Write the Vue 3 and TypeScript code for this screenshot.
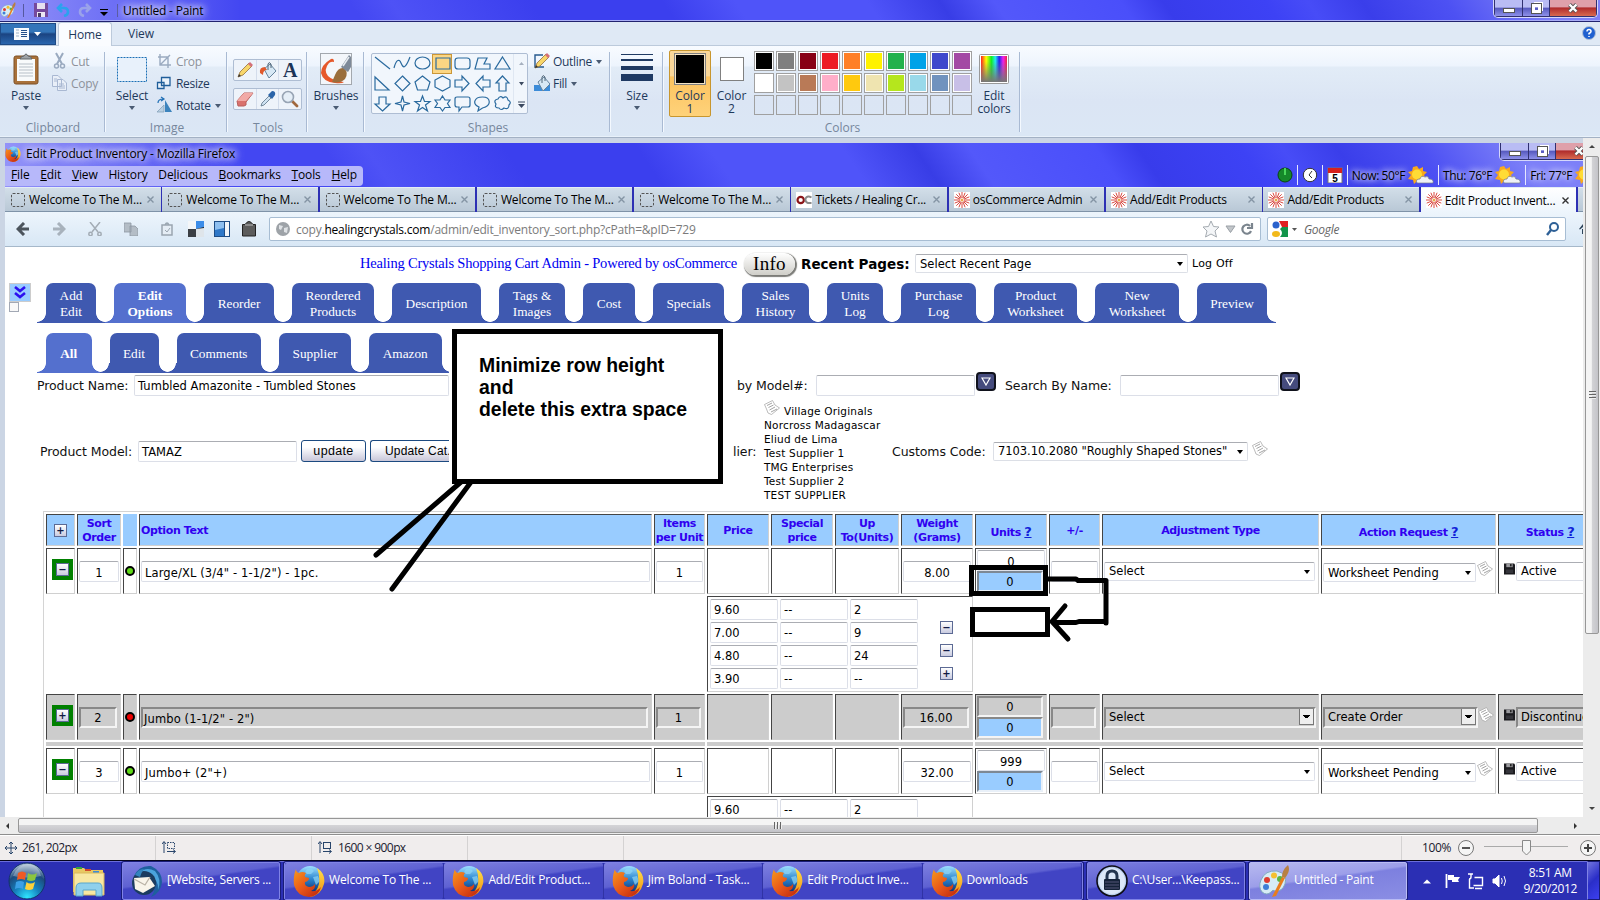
<script setup lang="ts">
interface PageTab { label: string[]; width: number; active?: boolean }
interface BrowserTab { title: string; icon: 'blank' | 'oc' | 'os'; active?: boolean }
interface StockRow {
  sort: string; text: string; items: string; weight: string
  units: string; action: string; status: string; live: boolean; open: boolean; prices: string[][]
}

const palette: string[] = [
  '#000000', '#7f7f7f', '#880015', '#ed1c24', '#ff7f27', '#fff200', '#22b14c', '#00a2e8', '#3f48cc', '#a349a4',
  '#ffffff', '#c3c3c3', '#b97a57', '#ffaec9', '#ffc90e', '#efe4b0', '#b5e61d', '#99d9ea', '#7092be', '#c8bfe7',
  '', '', '', '', '', '', '', '', '', '',
]

const shapes: string[] = [
  'M2 3L17 15', 'M1 14C3 6 6 4 8 9S12 16 17 3', 'M2 9a7.5 6 0 1 0 15 0a7.5 6 0 1 0 -15 0', 'M3 4H17V15H3Z',
  'M5 4H14Q17 4 17 7V12Q17 15 14 15H5Q2 15 2 12V7Q2 4 5 4Z', 'M2 15L5 4H14L11 10H17V15Z', 'M9.500 3L17 15H2Z',
  'M2 3V16H16Z', 'M9.500 2L17 9.500L9.500 17L2 9.500Z', 'M9.500 2L17 8L14.500 16H4.500L2 8Z', 'M9.500 2L17 6V13L9.500 17L2 13V6Z',
  'M2 6H9V2L16 9.500L9 17V13H2Z', 'M17 6H10V2L3 9.500L10 17V13H17Z', 'M9.500 2L16 9H13V17H6V9H3Z',
  'M9.500 17L17 10H13V3H6V10H2Z', 'M9.500 2L11 8L17 9.500L11 11L9.500 17L8 11L2 9.500L8 8Z',
  'M9.500 2L11.500 7.500H17L12.500 11L14.500 17L9.500 13.500L4.500 17L6.500 11L2 7.500H7.500Z',
  'M9.500 2L12 6L17 6L14.500 9.500L17 13.500H12L9.500 17L7 13.500H2L4.500 9.500L2 6H7Z',
  'M4 3H15Q17 3 17 5V11Q17 13 15 13H9L6 17V13H4Q2 13 2 11V5Q2 3 4 3Z',
  'M6 13C-1 10 1 3 9.500 3S19 12 9.500 14L5 17Z',
  'M5 5Q7 1 10 4Q14 1 15 6Q19 8 16 11Q16 16 11 14Q8 17 6 14Q1 14 3 10Q0 6 5 5Z',
]

const menus: [string, string, string][] = [
  ['', 'F', 'ile'], ['', 'E', 'dit'], ['', 'V', 'iew'], ['Hi', 's', 'tory'], ['De', 'l', 'icious'],
  ['', 'B', 'ookmarks'], ['', 'T', 'ools'], ['', 'H', 'elp'],
]

const browserTabs: BrowserTab[] = [
  ...Array.from({ length: 5 }, (): BrowserTab => ({ title: 'Welcome To The M...', icon: 'blank' })),
  { title: 'Tickets / Healing Cr...', icon: 'oc' },
  { title: 'osCommerce Admin', icon: 'os' },
  { title: 'Add/Edit Products', icon: 'os' },
  { title: 'Add/Edit Products', icon: 'os' },
  { title: 'Edit Product Invent...', icon: 'os', active: true },
]

const mainTabs: PageTab[] = [
  { label: ['Add', 'Edit'], width: 50 }, { label: ['Edit', 'Options'], width: 72, active: true },
  { label: ['Reorder'], width: 70 }, { label: ['Reordered', 'Products'], width: 82 },
  { label: ['Description'], width: 89 }, { label: ['Tags &', 'Images'], width: 66 },
  { label: ['Cost'], width: 52 }, { label: ['Specials'], width: 71 }, { label: ['Sales', 'History'], width: 67 },
  { label: ['Units', 'Log'], width: 56 }, { label: ['Purchase', 'Log'], width: 75 },
  { label: ['Product', 'Worksheet'], width: 83 }, { label: ['New', 'Worksheet'], width: 84 }, { label: ['Preview'], width: 70 },
]
const subTabs: PageTab[] = [
  { label: ['All'], width: 45.5, active: true }, { label: ['Edit'], width: 49 }, { label: ['Comments'], width: 84.5 },
  { label: ['Supplier'], width: 72 }, { label: ['Amazon'], width: 72.5 },
]

const suppliers: string[] = ['Village Originals', 'Norcross Madagascar', 'Eliud de Lima', 'Test Supplier 1', 'TMG Enterprises', 'Test Supplier 2', 'TEST SUPPLIER']

const prices: string[][] = [['9.60', '--', '2'], ['7.00', '--', '9'], ['4.80', '--', '24'], ['3.90', '--', '--']]
const rows: StockRow[] = [
  { sort: '1', text: 'Large/XL (3/4" - 1-1/2") - 1pc.', items: '1', weight: '8.00', units: '0', action: 'Worksheet Pending', status: 'Active', live: true, open: true, prices },
  { sort: '2', text: 'Jumbo (1-1/2" - 2")', items: '1', weight: '16.00', units: '0', action: 'Create Order', status: 'Discontinued', live: false, open: false, prices: [] },
  { sort: '3', text: 'Jumbo+ (2"+)', items: '1', weight: '32.00', units: '999', action: 'Worksheet Pending', status: 'Active', live: true, open: true, prices },
]

const firefoxWindows: string[] = ['Welcome To The ...', 'Add/Edit Product...', 'Jim Boland - Task...', 'Edit Product Inve...', 'Downloads']
</script>

<template>
  <svg class="defs" width="0" height="0">
    <defs>
      <linearGradient id="gBlue" x1="0" y1="0" x2="0" y2="1"><stop offset="0" stop-color="#9fe0ff" /><stop offset=".5" stop-color="#2b86cf" /><stop offset="1" stop-color="#0d2f74" /></linearGradient>
      <linearGradient id="gFox" x1="0" y1="0" x2="1" y2="1"><stop offset="0" stop-color="#f79a1c" /><stop offset=".5" stop-color="#e8561a" /><stop offset="1" stop-color="#b8230c" /></linearGradient>
      <linearGradient id="gGold" x1="0" y1="0" x2="0" y2="1"><stop offset="0" stop-color="#ffe14a" /><stop offset="1" stop-color="#f08a10" /></linearGradient>
      <radialGradient id="gOrb" cx=".5" cy=".95" r=".9"><stop offset="0" stop-color="#2fe6ff" /><stop offset=".4" stop-color="#1580bd" /><stop offset=".75" stop-color="#1c4a7c" /><stop offset="1" stop-color="#9fb6cc" /></radialGradient>
      <linearGradient id="gHue"><stop offset="0" stop-color="#f22" /><stop offset=".2" stop-color="#ff0" /><stop offset=".4" stop-color="#1e2" /><stop offset=".55" stop-color="#2ee" /><stop offset=".7" stop-color="#22e" /><stop offset=".85" stop-color="#e2e" /><stop offset="1" stop-color="#e24" /></linearGradient>
      <linearGradient id="gFade" x1="0" y1="0" x2="0" y2="1"><stop offset=".2" stop-color="#777" stop-opacity="0" /><stop offset="1" stop-color="#777" /></linearGradient>
    </defs>
    <symbol id="fox" viewBox="0 0 32 32">
      <circle cx="17" cy="14" r="13" fill="url(#gBlue)" />
      <path d="M14 4q5-1 7 2l-3 3-4 0-2-2zM20 12l5-1 2 5-4 4z" fill="#8fd6f7" opacity=".7" />
      <path d="M24 3Q33 9 31 19Q28 31 16 32Q24 27 26 19Q27 10 24 3Z" fill="url(#gGold)" />
      <path d="M3 4Q3 7 6 8Q9 6 13 8Q11 10 12 12L16 13Q16 16 12 17Q11 21 16 22Q20 22 22 19Q23 24 18 26Q24 27 28 22Q26 31 16 32Q4 31 1 20Q0 11 3 4Z" fill="url(#gFox)" />
    </symbol>
    <symbol id="tbird" viewBox="0 0 32 32">
      <path d="M3 11Q8 0 20 1Q31 6 31 17Q30 28 20 32Q26 24 22 15Z" fill="#1d5f9d" />
      <path d="M8 8Q15 1 24 6Q31 14 27 25Q28 14 18 11Z" fill="#4ba3dc" />
      <ellipse cx="13" cy="18" rx="12" ry="12" fill="#1b3c60" /><path d="M3 13L18 12L24 21L12 28L4 24Z" fill="#f8f4ea" /><path d="M3 14L14 20L19 12" fill="none" stroke="#b9b2a6" stroke-width="1.300" />
      <path d="M4 10Q7 4 13 4Q10 8 9 12Z" fill="#3484bd" />
    </symbol>
    <symbol id="palette" viewBox="0 0 32 32">
      <path d="M3 15Q7 5 19 6Q30 9 27 19Q24 27 17 26Q15 24 13 27Q9 31 4 27Q0 22 3 15Z" fill="#d7ecf5" stroke="#7fa8c0" />
      <circle cx="9" cy="15" r="3" fill="#df3b2f" /><circle cx="16" cy="10.500" r="3" fill="#f4c030" /><circle cx="22" cy="14" r="3" fill="#5cb544" /><circle cx="8" cy="22" r="3" fill="#3f7fd6" />
      <path d="M14 32L24 12L27 13L18 31Z" fill="#e87d1e" /><path d="M24 12Q24 5 30 0Q33 6 27 13Z" fill="#b88043" />
    </symbol>
    <symbol id="note" viewBox="0 0 16 15"><path d="M.5 4.500L8.500 .5L11 5L15.500 8L7.500 14.500L4 13L2.500 9Z" fill="#fff" stroke="#aaa" stroke-width=".8" /><path d="M3 5.500L8 3M4.500 7.500L9.500 5M5.500 10L11 7M7 12L13 9" fill="none" stroke="#8c8c8c" stroke-width=".8" /></symbol>
    <symbol id="floppy" viewBox="0 0 12 12"><path d="M0 0H11L12 1V12H0Z" fill="#1b1b1f" /><rect x="2.500" y="0" width="7" height="4" fill="#9a9a9e" /><rect x="6.500" y=".6" width="1.800" height="2.500" fill="#222" /><rect x="2" y="6.500" width="8" height="4" fill="#34343a" /></symbol>
    <symbol id="burst" viewBox="0 0 16 16"><rect width="16" height="16" fill="#fff" /><path d="M8 0V6M8 10V16M0 8H6M10 8H16M2.300 2.300L6.500 6.500M9.500 9.500L13.700 13.700M13.700 2.300L9.500 6.500M6.500 9.500L2.300 13.700M4.900 .7L7 6M11.100 .7L9 6M4.900 15.300L7 10M11.100 15.300L9 10M.7 4.900L6 7M.7 11.100L6 9M15.300 4.900L10 7M15.300 11.100L10 9" stroke="#d84a42" stroke-width="1" /><circle cx="8" cy="8" r="1.500" fill="#e9a64a" /></symbol>
    <symbol id="sun" viewBox="0 0 26 18"><path d="M9 0L11 3L15 1L15 5L19 6L16 9L18 13L14 13L13 17L9 15L6 18L5 14L0 13L3 9L0 6L4 5L5 1Z" fill="#f9a91c" /><circle cx="9" cy="8.500" r="5" fill="#ffdc35" /><path d="M9 17Q7 13 12 13Q13 9 17 11Q20 9 21 13Q26 13 25 17Z" fill="#eef1f5" stroke="#777f8c" stroke-width=".7" /></symbol>
    <symbol id="bucket" viewBox="0 0 18 18"><path d="M5 8L11 3L17 10L10 17Z" fill="#d7e8f5" stroke="#66839c" /><path d="M9 9V3Q10 0 12 3V7" fill="none" stroke="#53687b" /></symbol>
    <symbol id="pencil" viewBox="0 0 18 18"><path d="M2 16L4 11L13 2L16 5L7 14Z" fill="#f8d66a" stroke="#94703c" stroke-width=".8" /><path d="M12 3L14 1L17 4L15 6Z" fill="#d4707a" /><path d="M2 16L3 13L5 15Z" fill="#333" /></symbol>
    <symbol id="lens" viewBox="0 0 18 18"><path d="M10 10L16 16" stroke="#a1683e" stroke-width="2.800" stroke-linecap="round" /><circle cx="7" cy="7" r="5.500" fill="#e5eef7" stroke="#98a4b4" stroke-width="1.600" /></symbol>
  </svg>

  <div class="screen">
    <header class="titlebar glass">
      <svg class="t-logo" width="16" height="16"><use href="#palette" /></svg>
      <i class="t-sep"></i>
      <svg width="14" height="14" viewBox="0 0 14 14"><path d="M0 0H14V14H0Z" fill="#75499d" /><rect x="3" width="8" height="6" fill="#e6dfef" /><rect x="3" y="9" width="8" height="5" fill="#ece7f3" /><rect x="4" y="10" width="3" height="4" fill="#4c3d68" /></svg>
      <svg class="undo" width="14" height="14" viewBox="0 0 14 14"><path d="M3 5H8Q12 5 12 9Q12 12 8 13M6 1L2 5L6 9" fill="none" stroke="#2ba2ee" stroke-width="2.600" /></svg>
      <svg class="redo" width="14" height="14" viewBox="0 0 14 14"><path d="M11 5H6Q2 5 2 9Q2 12 6 13M8 1L12 5L8 9" fill="none" stroke="#9aa2ea" stroke-width="2.600" /></svg>
      <svg class="quick" width="8" height="7" viewBox="0 0 8 7"><path d="M0 .5H8" stroke="#000" /><path d="M0 3H8L4 7Z" /></svg>
      <i class="t-sep2"></i>
      <span class="t-name">Untitled - Paint</span>
      <div class="winbtns"><b class="min"><i></i></b><b class="max"><i></i></b><b class="cls"><svg width="12" height="10" viewBox="0 0 12 10"><path d="M2.500 1.500L9.500 8.500M9.500 1.500L2.500 8.500" stroke="#555" stroke-width="4" /><path d="M2.500 1.500L9.500 8.500M9.500 1.500L2.500 8.500" stroke="#fff" stroke-width="2.400" /></svg></b></div>
    </header>

    <div class="tabstrip">
      <div class="appbtn"><svg width="28" height="12" viewBox="0 0 28 12"><rect width="15" height="12" fill="#f7fafd" /><path d="M2 2H5M2 5H5M2 8H5" stroke="#9db1c6" /><path d="M7 2.500H13M7 4.500H13M7 6.500H13M7 8.500H13" stroke="#234f8a" /><path d="M20 4H27L23.500 8Z" fill="#fff" /></svg></div>
      <div class="rtab on">Home</div><div class="rtab">View</div>
      <svg class="help" width="14" height="14" viewBox="0 0 14 14"><circle cx="7" cy="7" r="6.500" fill="#2060d0" stroke="#b4c2d6" /><path d="M5 5.500Q5 3.500 7 3.500T9 5.500Q9 6.500 7 7.500V8.500M7 10V11" stroke="#fff" stroke-width="1.500" fill="none" /></svg>
    </div>

    <section class="ribbon">
      <div class="group g-clip">
        <div class="gbody">
          <div class="big w51">
            <svg class="bi" width="26" height="32" viewBox="0 0 26 32"><rect x="1" y="3" width="24" height="28" rx="2" fill="#a9713a" stroke="#7d5027" /><path d="M4 6H22V28H4Z" fill="#f8fafb" /><path d="M6 11H20M6 14H20M6 17H20M6 20H20M6 23H20" stroke="#b7bfc7" /><path d="M7 6Q8 3 11 3Q13-1 15 3Q18 3 19 6Z" fill="#9ea2a6" stroke="#5f6468" /></svg>
            <span>Paste</span><i class="arr"></i>
          </div>
          <div class="smalls dim">
            <div><svg width="18" height="18" viewBox="0 0 18 18"><path d="M5 1L11 12M12 1L6 12" stroke="#9aaac0" stroke-width="2" /><circle cx="5.500" cy="14" r="2" fill="none" stroke="#9aaac0" stroke-width="1.500" /><circle cx="11.500" cy="14" r="2" fill="none" stroke="#9aaac0" stroke-width="1.500" /></svg>Cut</div>
            <div><svg width="18" height="18" viewBox="0 0 18 18"><path d="M1.500 1.500H7L10.500 5V12.500H1.500ZM6.500 5.500H12L15.500 9V16.500H6.500Z" fill="#e9eff8" stroke="#a9b8d2" /><path d="M3 5H6M3 7H6M8 10H13M8 12H14M8 14H14" stroke="#a9b8d2" /></svg>Copy</div>
          </div>
        </div>
        <div class="glabel">Clipboard</div>
      </div>
      <div class="group g-image">
        <div class="gbody">
          <div class="big w51">
            <svg class="bi" width="32" height="32" viewBox="0 0 32 32"><rect x="1.500" y="4.500" width="29" height="24" fill="#e8f1fb" stroke="#1a6fb5" stroke-dasharray="2 1" /></svg>
            <span>Select</span><i class="arr"></i>
          </div>
          <div class="smalls">
            <div class="dimt"><svg width="18" height="18" viewBox="0 0 18 18"><path d="M4 2V13H15M2 5H12V16M4 13L14 3" fill="none" stroke="#9aaac0" stroke-width="1.400" /></svg>Crop</div>
            <div><svg width="18" height="18" viewBox="0 0 18 18"><path d="M1.500 8.500H8V14.500H1.500Z M5.500 3.500H14V11.500H5.500Z" fill="#eaf3fb" stroke="#1f5e9a" stroke-width="1.300" /></svg>Resize</div>
            <div><svg width="18" height="18" viewBox="0 0 18 18"><path d="M9 16V4L16 16Z" fill="#3c83bd" /><path d="M1 16L8 9V16Z" fill="#b9cfe2" stroke="#7f9cb5" stroke-width=".7" /><path d="M2 7Q2 3 7 3M5 1L8 3L5 5" fill="none" stroke="#1f6fb5" stroke-width="1.200" /></svg>Rotate<i class="arr after"></i></div>
          </div>
        </div>
        <div class="glabel">Image</div>
      </div>
      <div class="group g-tools">
        <div class="gbody toolbody">
          <div class="toolbox"><b><svg width="18" height="18"><use href="#pencil" /></svg></b><b><svg width="18" height="18"><use href="#bucket" /><path d="M1 12Q0 6 6 6L8 9Q4 9 4 14Z" fill="#e0592c" /></svg></b><b class="A">A</b></div>
          <div class="toolbox"><b><svg width="18" height="16" viewBox="0 0 18 16"><path d="M1 10L8 2H17L10 11V14L8 15H2Z" fill="#d9716d" stroke="#b85f5c" /><path d="M1 10L8 2H17L10 10Z" fill="#f2aaa6" /></svg></b><b><svg width="18" height="18" viewBox="0 0 18 18"><path d="M2 16L3 13L10 6L12 8L5 15Z" fill="#cfe2f2" stroke="#5a7286" stroke-width=".8" /><path d="M9 5L13 1Q17 1 16 5L13 9Z" fill="#2b64a8" /></svg></b><b><svg width="18" height="18"><use href="#lens" /></svg></b></div>
        </div>
        <div class="glabel">Tools</div>
      </div>
      <div class="group g-brush">
        <div class="gbody"><div class="big w56">
          <svg class="bi" width="32" height="32" viewBox="0 0 32 32"><rect x=".5" y=".5" width="31" height="31" fill="#f3f6fa" stroke="#a3a8ae" /><path d="M11 6Q1 12 1 20Q3 29 15 30Q22 31 24 29Q13 28 8 23Q3 17 9 10Q12 8 14 9Q14 5 11 6Z" fill="#e6582a" /><path d="M15 22Q18 14 24 15Q29 20 25 26Q20 31 12 29Z" fill="#9a6e3c" /><path d="M21 14L29 2L31 4V14L28 19Z" fill="#7d8998" /><path d="M23 13L29 4" stroke="#e6ebf0" stroke-width="1.500" /></svg>
          <span>Brushes</span><i class="arr"></i></div></div>
      </div>
      <div class="group g-shapes">
        <div class="gbody">
          <div class="gallery">
            <div class="shapegrid"><i v-for="(d, i) in shapes" :key="i" :class="{ sel: i === 3 }"><svg width="19" height="19"><path :d="d" fill="none" stroke="#2a6a9e" stroke-width="1.200" /></svg></i></div>
            <div class="gscroll"><svg width="14" height="58" viewBox="0 0 14 58"><path d="M5 11H10L7.500 8Z" fill="#a6b0bf" /><path d="M5 28H10L7.500 31.500ZM4 47.500H11V48.500H4ZM4 50H11L7.500 54Z" fill="#3c4a60" /></svg></div>
          </div>
          <div class="smalls out">
            <div><svg width="18" height="18"><path d="M10 3H2V15H11" fill="none" stroke="#27598f" stroke-width="1.400" /><use href="#pencil" /></svg>Outline<i class="arr after"></i></div>
            <div><svg width="18" height="18"><path d="M1 11H17V17H1Z" fill="#3b8bd8" /><use href="#bucket" /></svg>Fill<i class="arr after"></i></div>
          </div>
        </div>
        <div class="glabel">Shapes</div>
      </div>
      <div class="group g-size">
        <div class="gbody"><div class="big w51"><svg class="bi" width="32" height="32" viewBox="0 0 32 32" fill="#1f3a63"><rect y="1" width="32" height="1" /><rect y="6" width="32" height="2" /><rect y="13" width="32" height="4" /><rect y="21" width="32" height="7" /></svg><span>Size</span><i class="arr"></i></div></div>
      </div>
      <div class="group g-colors">
        <div class="gbody">
          <div class="big c1"><i class="sw one"></i><span>Color<br>1</span></div>
          <div class="big c2"><i class="sw two"></i><span>Color<br>2</span></div>
          <div class="palette"><i v-for="(c, i) in palette" :key="i" :class="{ filled: c }" :style="{ background: c || 'transparent' }"></i></div>
          <div class="big c3"><svg width="30" height="30" viewBox="0 0 30 30"><rect x=".5" y=".5" width="29" height="29" rx="1" fill="#fff" stroke="#999" /><rect x="2" y="2" width="26" height="26" fill="url(#gHue)" /><rect x="2" y="2" width="26" height="26" fill="url(#gFade)" /></svg><span>Edit<br>colors</span></div>
        </div>
        <div class="glabel">Colors</div>
      </div>
    </section>

    <main class="work">
      <div class="canvas">
        <div class="chrome glass">
          <div class="ff-title">
            <svg width="16" height="16"><use href="#fox" /></svg><span class="ff-name">Edit Product Inventory - Mozilla Firefox</span>
            <div class="winbtns ffb"><b class="min"><i></i></b><b class="max"><i></i></b><b class="cls"><svg width="12" height="10" viewBox="0 0 12 10"><path d="M2.500 1.500L9.500 8.500M9.500 1.500L2.500 8.500" stroke="#555" stroke-width="4" /><path d="M2.500 1.500L9.500 8.500M9.500 1.500L2.500 8.500" stroke="#fff" stroke-width="2.400" /></svg></b></div>
          </div>
          <div class="ff-menu">
            <nav><span v-for="m in menus" :key="m[1]">{{ m[0] }}<u>{{ m[1] }}</u>{{ m[2] }}</span></nav>
            <div class="weather">
              <svg width="16" height="16"><circle cx="8" cy="8" r="7" fill="#15882a" stroke="#0a4212" /><path d="M8 8V1" stroke="#5df06c" stroke-width="1.500" /></svg><i></i>
              <svg width="16" height="16"><circle cx="8" cy="8" r="6.700" fill="#fff" stroke="#333" /><path d="M10 4L7 8L10 11" fill="none" stroke="#333" /></svg><i></i>
              <svg width="16" height="16" viewBox="0 0 16 16"><rect x="1" y="1" width="14" height="15" fill="#fff" stroke="#777" /><rect x="1" y="1" width="14" height="5" fill="#d8211c" /><text x="8" y="14.500" text-anchor="middle" font-size="10" font-weight="bold" font-family="Liberation Sans">5</text></svg><i></i>
              <span>Now: 50°F</span><svg width="26" height="18"><use href="#sun" /></svg><i></i>
              <span>Thu: 76°F</span><svg width="26" height="18"><use href="#sun" /></svg><i></i>
              <span>Fri: 77°F</span><svg width="26" height="18"><use href="#sun" /></svg>
            </div>
          </div>
          <div class="ff-tabs">
            <div v-for="(t, i) in browserTabs" :key="i" class="ftab" :class="{ active: t.active }">
              <svg v-if="t.icon === 'blank'" width="16" height="16"><rect x="1.500" y="1.500" width="13" height="13" rx="1.500" fill="none" stroke="#555" stroke-dasharray="2.500 1.500" /></svg>
              <svg v-else-if="t.icon === 'oc'" width="16" height="16" viewBox="0 0 16 16"><rect width="16" height="16" fill="#fff" /><circle cx="4.700" cy="8" r="3.200" fill="none" stroke="#8b1519" stroke-width="2.200" /><path d="M15.500 5.500Q11.500 3 9.500 6.500Q9 10 12 11H15.500" fill="none" stroke="#8a8a8a" stroke-width="2" /></svg>
              <svg v-else width="16" height="16"><use href="#burst" /></svg>
              <span :class="{ tight: t.icon !== 'blank' }">{{ t.title }}</span><svg class="x" width="7" height="7" viewBox="0 0 7 7"><path d="M.5 .5L6.500 6.500M6.500 .5L.5 6.500" /></svg>
            </div>
            <div class="ftab"></div>
          </div>
        </div>
        <div class="ff-nav">
          <div class="navicons">
            <svg width="14" height="14" viewBox="0 0 14 14"><path d="M8 1L2 7L8 13M2 7H13" fill="none" stroke="#4c545c" stroke-width="3" /></svg>
            <svg width="14" height="14" viewBox="0 0 14 14"><path d="M6 1L12 7L6 13M12 7H1" fill="none" stroke="#a8b2bc" stroke-width="3" /></svg>
            <svg width="14" height="14" viewBox="0 0 14 14" fill="none" stroke="#a3acb5" stroke-width="1.500"><path d="M2 0L10 10M12 0L4 10" /><circle cx="2.500" cy="12" r="1.700" /><circle cx="11.500" cy="12" r="1.700" /></svg>
            <svg width="14" height="14" viewBox="0 0 14 14"><path d="M0 1H7V10H0ZM6 4H11L14 7V14H6Z" fill="#b4bdc6" stroke="#8e98a2" stroke-width=".8" /></svg>
            <svg class="n5" width="12" height="14" viewBox="0 0 12 14"><path d="M1 3H11V13H1ZM4 3Q6-1 8 3" fill="#e5edf5" stroke="#9aa5b0" stroke-width="1.500" /><path d="M4 8L6 10L9 6" fill="none" stroke="#9aa5b0" /></svg>
            <svg class="n6" width="16" height="16" viewBox="0 0 16 16"><rect width="16" height="16" fill="#222" /><path d="M0 0H8L8 8H0Z" fill="#f4f6f8" /><path d="M8 0H16V6L8 8Z" fill="#3d8de8" /><path d="M8 8L16 7V16H8Z" fill="#dfe5ea" /><path d="M0 8H8V16H0Z" fill="#3b3f44" /></svg>
            <svg class="n7" width="16" height="16" viewBox="0 0 16 16"><rect width="16" height="16" fill="#1e4d86" /><path d="M1 1H10V12H1Z" fill="#8fc0f0" /><path d="M11 1H15V15H11Z" fill="#f2f6fa" /><path d="M1 9L10 7V15H1Z" fill="#2f78c8" /></svg>
            <svg class="n8" width="14" height="16" viewBox="0 0 14 16"><path d="M.5 3.500H3Q7-2.500 11 3.500H13.500V15H.5Z" fill="#5c5c5c" stroke="#222" /><path d="M3 4H11" stroke="#bbb" /></svg>
          </div>
          <div class="url">
            <svg width="14" height="14"><circle cx="7" cy="7" r="7" fill="#9ea3a8" /><path d="M3 3L7 4L5 8L3 7ZM8 6L12 5L11 11L8 10Z" fill="#dfe2e5" /></svg>
            <span class="addr">copy.<b>healingcrystals.com</b>/admin/edit_inventory_sort.php?cPath=&amp;pID=729</span>
            <svg class="star" width="54" height="18" viewBox="0 0 54 18"><path d="M9 1L11.500 6.500L17 7L13 11L14.500 17L9 14L3.500 17L5 11L1 7L6.500 6.500Z" fill="#f4f6f8" stroke="#a5abb1" /><path d="M24 6H33L28.500 12.500Z" fill="#c2c6ca" stroke="#9aa0a6" /><path d="M48 6A4.500 4.500 0 1 0 49 11M45 8H50V3" fill="none" stroke="#7b858e" stroke-width="2.200" /></svg>
          </div>
          <div class="search">
            <svg width="26" height="16" viewBox="0 0 26 16"><rect width="16" height="16" fill="#fff" /><circle cx="4" cy="4" r="3.500" fill="#2b62cc" /><path d="M7 0H16V6H10Z" fill="#e01f20" /><path d="M10 6H16V16H8Q12 12 8 8Z" fill="#12944a" /><ellipse cx="4" cy="13" rx="4" ry="3" fill="#f2b91a" /><path d="M20 7H25L22.500 10Z" fill="#555" /></svg>
            <em>Google</em>
            <svg class="mag" width="13" height="14" viewBox="0 0 13 14"><circle cx="8" cy="5" r="4" fill="none" stroke="#2e6096" stroke-width="2" /><path d="M5 8L1 13" stroke="#2e6096" stroke-width="2.400" /></svg>
          </div>
          <svg class="home" width="4" height="10" viewBox="0 0 4 10"><path d="M0 5L4 0V3L1 5.500ZM3 5V10H4V5Z" fill="#2d4358" /></svg>
        </div>

        <div class="page">
          <div class="head">
            <span class="brand">Healing Crystals Shopping Cart Admin - Powered by osCommerce</span>
            <span class="info">Info</span>
            <b class="recent">Recent Pages:</b>
            <div class="select rp">Select Recent Page<i></i></div>
            <span class="logoff">Log Off</span>
          </div>
          <div class="tabline">
            <div class="gutter"><div class="chev"><svg width="12" height="13" viewBox="0 0 12 13"><path d="M1 1L6 5L11 1M1 7L6 11L11 7" fill="none" stroke="#2b10f0" stroke-width="2.600" /></svg></div><i class="chk"></i></div>
            <div v-for="t in mainTabs" :key="t.label.join()" class="ptab" :class="{ active: t.active }" :style="{ width: t.width + 'px' }"><span v-for="l in t.label" :key="l">{{ l }}</span></div>
          </div>
          <div class="tabline second">
            <div class="gutter"></div>
            <div v-for="t in subTabs" :key="t.label.join()" class="ptab" :class="{ active: t.active }" :style="{ width: t.width + 'px' }"><span v-for="l in t.label" :key="l">{{ l }}</span></div>
          </div>
          <div class="formA">
            <label>Product Name:</label><div class="inp">Tumbled Amazonite - Tumbled Stones</div><span></span>
            <label>by Model#:</label><div class="inp"></div><b class="go"><svg width="10" height="9"><path d="M1 1H9L5 8Z" fill="none" stroke="#fff" stroke-width="1.200" /></svg></b>
            <label>Search By Name:</label><div class="inp"></div><b class="go"><svg width="10" height="9"><path d="M1 1H9L5 8Z" fill="none" stroke="#fff" stroke-width="1.200" /></svg></b>
          </div>
          <div class="formB">
            <label class="pm">Product Model:</label><div class="inp">TAMAZ</div><div class="btn up">update</div><div class="btn cat">Update Cat.</div><span></span>
            <label class="lier">lier:</label>
            <ul><li v-for="(s, i) in suppliers" :key="s"><svg v-if="i === 0" width="16" height="15"><use href="#note" /></svg>{{ s }}</li></ul>
            <label>Customs Code:</label><div class="select cc">7103.10.2080 "Roughly Shaped Stones"<i></i></div>
            <svg class="nt" width="16" height="15"><use href="#note" /></svg>
          </div>

          <div class="table">
            <div class="row headrow">
              <div><b class="pm-btn">+</b></div><div>Sort<br>Order</div><div class="flat"></div><div class="left">Option Text</div><div>Items<br>per Unit</div><div>Price</div><div>Special<br>price</div><div>Up<br>To(Units)</div><div>Weight<br>(Grams)</div>
              <div><span class="q">Units <u>?</u></span></div><div>+/-</div><div>Adjustment Type</div><div><span class="q">Action Request <u>?</u></span></div><div><span class="q st">Status <u>?</u></span></div>
            </div>
            <template v-for="r in rows" :key="r.sort">
              <div v-if="r.sort === '3'" class="row divider"><i></i><i></i><i></i></div>
              <div class="row item" :class="{ off: !r.live }">
                <div class="tg"><span class="green"><b class="pm-btn">{{ r.open ? '−' : '+' }}</b></span></div>
                <div><div class="f mid">{{ r.sort }}</div></div>
                <div><i class="dot"></i></div>
                <div><div class="f">{{ r.text }}</div></div>
                <div><div class="f mid">{{ r.items }}</div></div>
                <div></div><div></div><div></div>
                <div><div class="f mid">{{ r.weight }}</div></div>
                <div class="stack"><div class="f mid">{{ r.units }}</div><div class="f mid blue">0</div></div>
                <div><div class="f"></div></div>
                <div><div class="f sel adj">Select<i></i></div></div>
                <div class="act"><div class="f sel">{{ r.action }}<i></i></div><svg width="16" height="15"><use href="#note" /></svg></div>
                <div class="stt"><svg width="11" height="12"><use href="#floppy" /></svg><div class="f sel">{{ r.status }}</div></div>
              </div>
              <div v-if="r.open" class="row subrow">
                <div class="sub">
                  <div v-for="(p, i) in r.prices" :key="i" class="prow"><div v-for="(v, j) in p" :key="j" class="f">{{ v }}</div><b v-if="i > 0" class="pm-btn">{{ i < 3 ? '−' : '+' }}</b></div>
                </div>
              </div>
            </template>
          </div>
        </div>

        <div class="patch"></div>
        <div class="callout">Minimize row height<br>and<br>delete this extra space</div>
        <svg class="ink" width="1578" height="674" viewBox="5 143 1578 674" fill="none" stroke="#000" stroke-width="5" stroke-linecap="round" stroke-linejoin="round">
          <path d="M461 482L376 555M471 482L392 589" />
          <g stroke-linejoin="miter"><rect x="971.500" y="567.500" width="74" height="26" /><rect x="972.500" y="609.500" width="75" height="25" /></g>
          <path d="M1048 579H1076L1078 580.500H1106V623M1106 621.500H1079L1076 622.500H1053M1065 606L1052 621.500L1068 639" />
        </svg>
      </div>
      <div class="vscroll"><svg width="8" height="5"><path d="M1 4L4 1L7 4Z" fill="#444" /></svg><div class="thumb"><i></i><i></i><i></i></div><svg width="8" height="5"><path d="M1 1L4 4L7 1Z" fill="#444" /></svg></div>
      <div class="hscroll"><svg width="5" height="8"><path d="M4 1L1 4L4 7Z" fill="#333" /></svg><div class="thumb"><i></i><i></i><i></i></div><svg width="5" height="8"><path d="M1 1L4 4L1 7Z" fill="#333" /></svg></div>
    </main>

    <footer class="status">
      <div class="s1"><svg width="12" height="12" viewBox="0 0 12 12"><path d="M6 0V12M0 6H12M4 2L6 0L8 2M4 10L6 12L8 10M2 4L0 6L2 8M10 4L12 6L10 8" fill="none" stroke="#28456b" /></svg><span>261, 202px</span></div>
      <div class="s2"><svg width="15" height="13"><path d="M2 12V1M0 3L2 .5L4 3" fill="none" stroke="#28456b" /><rect x="5.500" y="1.500" width="7" height="6" fill="none" stroke="#28456b" stroke-dasharray="1.500 1" /><path d="M5 10.500H13M11 8.500L13.500 10.500L11 12.500" fill="none" stroke="#28456b" /></svg></div>
      <div class="s3"><svg width="15" height="13"><path d="M2 12V1M0 3L2 .5L4 3" fill="none" stroke="#28456b" /><rect x="5.500" y="1.500" width="7" height="6" fill="none" stroke="#28456b" /><path d="M5 10.500H13M11 8.500L13.500 10.500L11 12.500" fill="none" stroke="#28456b" /></svg><span>1600 × 900px</span></div>
      <div class="s4"></div><div class="s5"></div>
      <div class="s6"><span>100%</span><svg width="140" height="20" viewBox="0 0 140 20"><circle cx="9" cy="10" r="7.500" fill="#f5f5f5" stroke="#777" /><path d="M5 10H13" stroke="#555" stroke-width="2" /><path d="M27 8.500H111" stroke="#aaa" /><path d="M65.500 2.500H73.500V13L69.500 17L65.500 13Z" fill="#f4f4f4" stroke="#888" /><circle cx="131" cy="10" r="7.500" fill="#f5f5f5" stroke="#777" /><path d="M127 10H135M131 6V14" stroke="#444" stroke-width="2" /></svg></div>
    </footer>

    <footer class="taskbar">
      <svg class="orb" width="38" height="38" viewBox="0 0 38 38"><circle cx="19" cy="19" r="18" fill="url(#gOrb)" stroke="#12326a" /><path d="M5 14Q10 2 20 2T33 14Q20 17 5 14Z" fill="#fff" opacity=".3" /><path d="M10 11Q14 8 18 11L17 18Q13 16 9 18Z" fill="#ee5a24" /><path d="M20 11Q24 14 29 11L27 18Q23 20 19 18Z" fill="#8bc63e" /><path d="M8 20Q12 18 16 20L15 27Q11 25 7 27Z" fill="#3aa0e6" /><path d="M18.500 20Q22 23 27 20L25 27Q21 29 17 27Z" fill="#fbd13a" /></svg>
      <svg class="expl" width="34" height="32" viewBox="0 0 34 32"><path d="M1 3H12L14 5H31V27H1Z" fill="#e9c862" /><path d="M4 2H10V4H4Z" fill="#35a53a" /><path d="M13 4H19V6H13Z" fill="#d24a2c" /><path d="M21 6H27V8H21Z" fill="#3c8bd8" /><path d="M2 8H32V30H2Z" fill="#f8e7a2" stroke="#d9b95c" /><path d="M4 31V23Q4 18 9 18H26Q30 18 30 23V31H24V25H11V31Z" fill="#8fd0ec" stroke="#5aa6cc" /></svg>
      <div class="tb"><svg width="32" height="32"><use href="#tbird" /></svg><span>[Website, Servers ...</span></div>
      <div class="ffgroup"><div v-for="w in firefoxWindows" :key="w" class="tb"><svg width="32" height="32"><use href="#fox" /></svg><span>{{ w }}</span></div></div>
      <div class="tb kp"><svg width="32" height="32" viewBox="0 0 32 32"><circle cx="16" cy="16" r="15" fill="#b9cfee" stroke="#0c0c14" stroke-width="1.600" /><circle cx="16" cy="16" r="13" fill="#dce8f8" /><path d="M11 15V11Q11 6 16 6T21 11V15" fill="none" stroke="#23354f" stroke-width="3" /><rect x="8" y="14" width="16" height="11" rx="1" fill="#152238" /><path d="M9 17H23M9 20H23M9 23H23" stroke="#557" /></svg><span>C:\User...\Keepass...</span></div>
      <div class="tb lit"><svg width="32" height="32"><use href="#palette" /></svg><span>Untitled - Paint</span></div>
      <svg class="tray" width="88" height="20" viewBox="0 0 88 20" fill="none" stroke="#fff"><path d="M1 12.500L5 8.500L9 12.500Z" fill="#fff" stroke="none" /><path d="M24.500 3V17" stroke-width="1.800" /><path d="M26 4H32V6H38L36 9L37 11H30V9H26Z" fill="#fff" stroke="none" /><path d="M52.500 6.500H60.500V14.500H51.500M53 17.500H60M49 3V6Q49 8 47 8M46 3H51M47.500 8V17H52" stroke-width="1.400" /><path d="M71 8H73L77 4V16L73 12H71Z" fill="#fff" /><path d="M79.500 7Q81 10 79.500 13M82 5Q85 10 82 15" /></svg>
      <div class="clock">8:51 AM<br>9/20/2012</div>
      <div class="peek"></div>
    </footer>
  </div>
</template>

<style>
html, body { margin: 0; overflow: hidden; }
</style>

<style scoped>
* { box-sizing: border-box; }
svg { display: block; flex: none; }
.defs { position: absolute; }
.screen { width: 1600px; height: 900px; overflow: hidden; display: flex; flex-direction: column; font: 12px "Open Sans", "Noto Sans", sans-serif; letter-spacing: -.3px; color: #1e395b; background: #cbd5e4; }
.screen > * { flex: none; }
.glass { background: linear-gradient(90deg, #9393f8 0, #8080f800 240px), linear-gradient(56deg, #4347f2 0 300px, #4e52f6 335px, #3b3fee 450px 560px, #4f54f9 620px 730px, #383de6 790px, #5358fa 835px, #4a4ffa 940px, #383ceb 975px, #3d42f5 1060px, #474cf7 1095px, #3a3eea 1140px, #4d51f3 1210px, #7d80f8 1290px); color: #000; }

.titlebar { height: 22px; display: flex; align-items: center; border-bottom: 1px solid #22236f; box-shadow: inset 0 -1px #a9adf5; padding-bottom: 1px; }
.t-sep, .t-sep2 { width: 1px; height: 13px; background: #55589f; margin: 0 10px 0 7px; }
.undo { margin-left: 8px; }
.redo { margin-left: 8px; }
.quick { margin: 5px 0 0 8px; }
.t-sep2 { margin: 0 0 0 9px; }
.t-name { margin-left: 5px; text-shadow: 0 0 7px #fff, 0 0 9px #fff, 0 0 12px #ccf; letter-spacing: -.2px; }
.winbtns { margin-left: auto; align-self: flex-start; margin-right: 2px; display: flex; height: 18px; border: 1px solid #d5d7fb; border-top: 0; border-radius: 0 0 5px 5px; background: #30306f; overflow: hidden; padding: 0 1px 1px; gap: 1px; flex: none; }
.winbtns b { width: 27px; flex: none; background: linear-gradient(#b9bcf4 0 45%, #5558bd 50%, #8e91ea); display: grid; place-items: center; }
.winbtns .max { width: 26px; }
.winbtns .cls { width: 46px; background: linear-gradient(#dfa0aa 0 42%, #b02c2c 50%, #d86a50); }
.winbtns .min i { width: 12px; height: 5px; background: #fff; border: 1px solid #555; margin-top: 4px; }
.winbtns .max i { width: 9px; height: 9px; border: 3px solid #fff; outline: 1px solid #555; box-shadow: 2px -2px 0 #fff; }
.ffb { margin-right: -21px; }

.tabstrip { height: 24px; background: #dfe9f5; display: flex; align-items: flex-end; border-bottom: 1px solid #bccadb; font-size: 12px; }
.appbtn { width: 56px; height: 22px; align-self: flex-start; margin-top: 1px; background: linear-gradient(#3375b9 0 40%, #1b4481 50%, #2a66ae); border: 1px solid #1e4a85; padding: 4px 0 0 13px; }
.rtab { height: 23px; line-height: 23px; width: 54px; text-align: center; letter-spacing: -.1px; margin-left: 2px; }
.rtab.on { background: #fafcff; border: 1px solid #bccadb; border-bottom: 0; border-radius: 3px 3px 0 0; margin-bottom: -1px; height: 24px; }
.help { margin: 0 4px 5px auto; }

.ribbon { height: 92px; display: flex; background: linear-gradient(#f8fbff 0, #edf4fd 20px, #e2ecf7 21px, #dbe5f4 55px, #dbe7f5 89px); border-bottom: 1px solid #a3b1c4; box-shadow: inset 0 -1px #e8f1fa; padding-top: 4px; }
.group { position: relative; display: flex; flex-direction: column; height: 86px; }
.group::after { content: ""; position: absolute; right: 0; top: 2px; width: 2px; height: 80px; background: linear-gradient(90deg, #a9bad3 50%, #f4f9ff 50%); }
.g-clip { width: 106px; } .g-image { width: 122px; } .g-tools { width: 80px; } .g-brush { width: 57px; } .g-shapes { width: 246px; } .g-size { width: 53px; } .g-colors { width: 357px; }
.gbody { height: 70px; display: flex; }
.glabel { text-align: center; color: #76869c; line-height: 17px; letter-spacing: 0; }
.big { display: flex; flex: none; flex-direction: column; align-items: center; text-align: center; padding-top: 3px; line-height: 13px; letter-spacing: -.1px; }
.big > span { margin-top: 4px; }
.w51 { width: 52px; } .w56 { width: 56px; }
.arr { border: 3.5px solid transparent; border-top: 4px solid #4a5b73; border-bottom: 0; margin-top: 4px; width: 0; }
.arr.after { margin: 1px 0 0 2px; }
.smalls div { display: flex; align-items: center; height: 22px; gap: 2px; letter-spacing: -.3px; }
.smalls.dim { margin-left: -1px; }
.smalls.dim, .dimt { color: #8d929a; }
.g-image .smalls { margin-left: -2px; }
.toolbody { flex-direction: column; gap: 7px; padding: 9px 0 0 5px; }
.toolbox { display: flex; width: 69px; height: 22px; border: 1px solid #aebdd3; border-radius: 2px; background: #eef3fa; }
.toolbox b { flex: 1; display: grid; place-items: center; border-right: 1px solid #d3dceb; }
.toolbox b:last-child { border: 0; }
.A { font: bold 20px/18px "Liberation Serif"; color: #1c3457; }
.gallery { width: 157px; flex: none; height: 61px; border: 1px solid #aebdd3; border-radius: 2px; margin: 3px 0 0 6px; display: flex; background: #f1f6fc; }
.shapegrid { display: grid; grid-template-columns: repeat(7, 20.1px); grid-auto-rows: 19.700px; width: 141px; flex: none; }
.shapegrid i { display: grid; place-items: center; overflow: hidden; }
.shapegrid i.sel { background: #fcd683; box-shadow: inset 0 0 0 1px #cb9738; }
.gscroll { border-left: 1px solid #dfe7f2; }
.out { margin-left: 5px; }
.c1 { width: 42px; margin-left: 5px; height: 67px; background: linear-gradient(#f9d79a 0 38%, #fdc35f 40%, #fed27a); border: 1px solid #c8962e; border-radius: 2px; padding-top: 2px; }
.c2 { width: 41px; }
.c2 .sw { margin-top: 4px; }
.c2 span { margin-top: 8px; }
.sw { border: 1px solid #808080; box-shadow: inset 0 0 0 1px #fff; }
.one { width: 32px; height: 32px; background: #000; border: 1px solid #808080; box-shadow: inset 0 0 0 1px #f4e4c4; }
.two { width: 24px; height: 24px; background: #fff; }
.palette { display: grid; flex: none; grid-template-columns: repeat(10, 20px); grid-auto-rows: 20px; gap: 2px; margin: 1px 0 0 2px; }
.palette i { border: 1px solid #a0a0a0; }
.palette .filled { box-shadow: inset 0 0 0 1px #fff; }
.c3 { width: 42px; padding-top: 4px; margin-left: 1px; }
.c3 span { margin-top: 5px; }

.work { height: 697px; display: grid; grid-template: 679px 18px / 1583px 17px; }
.canvas { position: relative; margin: 5px 0 0 5px; background: #fff; overflow: hidden; display: flex; flex-direction: column; }
.canvas > div { flex: none; }
.chrome { height: 69px; }
.ff-title { height: 22px; display: flex; align-items: center; gap: 5px; letter-spacing: -.17px; }
.ff-name { text-shadow: 0 0 7px #fff, 0 0 9px #fff, 0 0 12px #ccf; margin-top: -2px; }
.ff-menu { height: 22px; display: flex; align-items: center; }
.ff-menu nav { display: flex; height: 20px; line-height: 18px; width: 358px; background: #b7b8fa; border-radius: 0 4px 4px 0; padding: 0 6px; justify-content: space-between; letter-spacing: -.12px; }
.weather { margin-left: auto; display: flex; flex: none; align-items: center; gap: 3px; margin: -2px -18px 0 auto; }
.weather i { width: 1px; height: 20px; background: #e6e7ff; margin: 0 1px; }
.weather span { text-shadow: 0 0 6px #fff, 0 0 8px #fff; letter-spacing: -.4px; }
.ff-tabs { height: 25px; display: flex; gap: 1.800px; overflow: hidden; background: #2d30b4; }
.ftab { width: 155.500px; flex: none; height: 25px; display: flex; align-items: center; padding: 1px 7px 0 5px; background: linear-gradient(#d3dfe9, #b9c8d6); border-bottom: 1px solid #7f93a8; color: #000; gap: 3px; overflow: hidden; white-space: nowrap; box-shadow: inset 0 1px #e4edf5; letter-spacing: -.15px; }
.ftab.active { background: linear-gradient(#fff, #edf5fc); border-bottom: 0; }
.ftab .x { margin-left: auto; stroke: #8494a4; stroke-width: 1.4; }
.ftab.active .x { stroke: #333; }
.ftab .tight { letter-spacing: -.25px; }
.ff-nav { height: 35px; background: linear-gradient(#edf5fc, #d8e7f5); border-bottom: 1px solid #a6b8ca; display: flex; align-items: center; }
.navicons { display: flex; align-items: center; width: 252px; padding-left: 11px; gap: 22px; flex: none; }
.n5 { margin-left: 1px; }
.n6 { margin-left: -7px; }
.n7 { margin-left: -12px; }
.n8 { margin-left: -10px; }
.url, .search { height: 24px; border: 1px solid #a7bdd3; border-radius: 2px; background: #fff; display: flex; flex: none; align-items: center; color: #000; }
.url { width: 992px; margin-left: 12px; padding: 0 4px 0 6px; gap: 6px; }
.addr { color: #7b7b7b; letter-spacing: -.22px; white-space: nowrap; }
.addr b { font-weight: normal; color: #000; }
.star { margin-left: auto; }
.search { width: 299px; margin-left: 6px; padding: 0 6px 0 4px; gap: 6px; color: #666; }
.mag { margin-left: auto; }
.home { margin-left: auto; }

.page { height: 570px; color: #000; font-family: "DejaVu Sans", sans-serif; font-size: 12px; letter-spacing: -.2px; overflow: hidden; }
.head { height: 36px; display: flex; align-items: center; padding: 0 0 3px 355px; }
.brand { width: 377px; font: 14.5px "Liberation Serif"; letter-spacing: -.2px; color: #0000f0; white-space: nowrap; }
.info { width: 51px; height: 22px; margin: 1px 6px 0 7px; border-radius: 12px; background: linear-gradient(#fff, #cfcec8); box-shadow: 1px 1px 1px 1px #7c7c78; font: 19px/22px "Liberation Serif"; text-align: center; letter-spacing: .3px; }
.recent { width: 114px; font-size: 13.5px; white-space: nowrap; letter-spacing: .02px; }
.select { border: 1px solid #dcdfe6; border-top-color: #abadb3; border-radius: 2px; height: 19px; line-height: 17px; display: flex; align-items: center; background: #fff; white-space: nowrap; }
.select i, .sel i { margin-left: auto; border: 3.500px solid transparent; border-top: 4px solid #000; border-bottom: 0; width: 0; }
.rp { width: 273px; padding: 1px 4px 0 4px; font-size: 11.5px; letter-spacing: .05px; }
.logoff { margin-left: 4px; font-size: 11px; letter-spacing: .2px; }
.tabline { display: flex; height: 40px; align-items: flex-start; }
.second { margin-top: 10px; }
.gutter { width: 41px; padding-left: 4px; flex: none; }
.chev { width: 22px; height: 19px; background: #99ccff; border: 1px solid #ccc; display: grid; place-items: center; }
.chk { display: block; width: 10px; height: 10px; border: 1px solid #a2a8b4; background: #f8f8f8; }
.ptab { position: relative; flex: none; height: 40px; margin-right: 18px; background: #3f59b0; border-radius: 7px 7px 0 0; color: #fff; font: 13.3px/16px "Liberation Serif"; letter-spacing: -.02px; display: flex; flex-direction: column; justify-content: center; align-items: center; padding-top: 2px; --c: #3f59b0; }
.ptab.active { background: #5470ce; font-weight: bold; --c: #5470ce; }
.ptab::before, .ptab::after { content: ""; position: absolute; bottom: 0; width: 9.100px; height: 10px; }
.ptab::before { right: 100%; background: radial-gradient(circle at 0 0, transparent 8.500px, var(--c) 9.200px); }
.ptab::after { left: 100%; background: radial-gradient(circle at 100% 0, transparent 8.500px, var(--c) 9.200px); }
label { font-size: 12.5px; white-space: nowrap; letter-spacing: -.08px; color: #111; }
.inp { height: 21px; border: 1px solid #dcdfe8; border-top-color: #abadb3; border-radius: 2px; padding: 0 3px; line-height: 20px; font-size: 11.5px; letter-spacing: .04px; white-space: nowrap; }
.formA { height: 23px; padding: 2px 0 0 32px; display: grid; grid-template-columns: 97px 315px 288px 79px 159px 30px 115px 159px 30px; align-items: center; }
.go { width: 20px; height: 19px; margin: -8px 0 0 1px; background: #454b7d; border: 2px solid #10121c; border-radius: 4px; display: grid; place-items: center; }
.formB { height: 115px; padding: 0 0 5px 35px; display: grid; grid-template-columns: 98px 163px 69px 79px 284px 31px 128px 101px 259px 16px; align-items: center; }
.formB .inp { width: 159px; }
.btn { height: 22px; border: 1px solid #1c4a80; border-radius: 3px; background: linear-gradient(#fff 0 30%, #ebebf3 55%, #c8c6d8); text-align: center; font: 12.5px/20px "Liberation Sans"; letter-spacing: .35px; white-space: nowrap; }
.up { width: 65px; }
.cat { border-right: 0; border-radius: 3px 0 0 3px; padding-left: 14px; font-size: 12px; text-align: left; letter-spacing: .15px; overflow: hidden; }
.lier { padding-left: 0; }
ul { margin: 3px 0 0; padding: 0; list-style: none; font-size: 10.5px; line-height: 14px; white-space: nowrap; letter-spacing: .2px; }
li { height: 14px; }
li svg { display: inline-block; margin: -5px 4px 0 0; vertical-align: 0; }
.cc { width: 255px; padding: 1px 4px 0; font-size: 11.5px; letter-spacing: -.05px; }
.nt { margin-top: -6px; }

.table { margin-left: 38px; width: 1600px; border: 1px solid #d4d4d4; padding: 2px 0 0 2px; }
.row { display: grid; grid-template-columns: 29px 44px 14px 513px 51px 62px 62px 64px 72px 72px 51px 217px 175px 110px; column-gap: 2px; margin-bottom: 2px; }
.row > div { border: 1px solid #d0d0d0; border-top-color: #444; border-left-color: #444; min-width: 0; }
.headrow > div { height: 32px; background: #99ccff; color: #3000f0; font: bold 11px/14px "DejaVu Sans"; letter-spacing: -.38px; text-align: center; display: flex; align-items: center; justify-content: center; white-space: nowrap; padding-top: 2px; }
.headrow > div:first-child { padding-top: 0; }
.headrow > .left { justify-content: flex-start; padding-left: 1px; }
.headrow > .flat { border: 0; }
.q { padding-top: 2px; }
.q u { font-size: 13px; color: #1020d8; }
.st { margin-left: -6px; }
.item > div { height: 46px; display: flex; flex-direction: column; justify-content: center; padding: 0 1px; }
.item > .tg { align-items: flex-end; padding: 0 1px 4px 0; }
.green { width: 21px; height: 21px; background: #008000; display: grid; place-items: center; }
.pm-btn { width: 13px; height: 13px; background: linear-gradient(#fff, #c9cbe0); border: 1px solid #5c6a94; color: #111a44; font: bold 10px/11px "DejaVu Sans"; text-align: center; display: block; letter-spacing: 0; }
.f { height: 21px; flex: none; border: 1px solid #dcdfe8; border-top-color: #abadb3; border-radius: 2px; background: #fff; padding: 0 3px; line-height: 21px; font-size: 11.5px; letter-spacing: .12px; white-space: nowrap; overflow: hidden; color: #000; }
.mid { text-align: center; letter-spacing: 0; }
.item .f { line-height: 22px; }
.dot { width: 10px; height: 10px; border-radius: 50%; border: 2px solid #000; background: #5fd916; }
.item > .stack { justify-content: flex-start; padding-top: 1px; }
.item .blue { background: #99ccff; border: 2px solid #e9f0f8; border-top-color: #7d8894; border-left-color: #7d8894; border-radius: 0; line-height: 18px; width: 66px; }
.item .sel { display: flex; align-items: center; width: 100%; height: 19px; line-height: 17px; padding: 1px 4px 0; letter-spacing: 0; }
.item .adj { width: 211px; }
.item > .act { flex-direction: row; align-items: center; justify-content: flex-start; }
.act .f.sel { width: 153px; margin-top: 3px; }
.act svg { margin: -5px 0 0 1px; }
.item > .stt { flex-direction: row; align-items: center; justify-content: flex-start; padding-left: 5px; }
.stt svg { margin-top: -5px; margin-right: 1px; }
.off > div { background: #ccc; }
.off .dot { background: #e00; }
.off .f { background: #ccc; border: 2px solid #f4f4f4; border-top-color: #888; border-left-color: #888; border-radius: 0; line-height: 20px; padding: 0 3px; }
.off .f.mid { width: calc(100% - 2px); line-height: 19px; }
.off .f:not(.mid):not(.sel) { width: calc(100% - 2px); padding: 0 1px; }
.off .f.blue { background: #99ccff; line-height: 18px; }
.off .f.sel { height: 21px; }
.off .f.adj { width: 212px; }
.off .act .f.sel { width: 155px; margin-top: 0; }
.off .act svg { margin-left: 0; }
.off .sel i { border: 1px solid #777; width: 15px; height: 17px; margin: -1px -3px 0 auto; background: linear-gradient(#000, #000) 3px 6px / 7px 1px no-repeat, linear-gradient(#000, #000) 4px 7px / 5px 1px no-repeat, linear-gradient(#000, #000) 5px 8px / 3px 1px no-repeat, #eee; }
.subrow .sub { grid-column: 6 / 10; height: 96px; padding: 2px 0 0 2px; display: flex; flex-direction: column; gap: 2px; }
.prow { display: flex; gap: 2px; }
.prow .f { width: 68px; letter-spacing: 0; }
.prow .pm-btn { margin: -1px 0 0 20px; }
.divider i { height: 4px; background: #ccc; grid-column: 1 / 6; }
.divider i:nth-child(2) { grid-column: 6 / 10; }
.divider i:nth-child(3) { grid-column: 10 / 15; }

.patch { position: absolute; left: 444px; top: 182px; width: 284px; height: 150px; background: #fff; }
.callout { position: absolute; left: 447px; top: 186px; width: 271px; height: 155px; border: 5px solid #000; background: #fff; color: #000; font: bold 19.400px/22px "Liberation Sans"; letter-spacing: 0; padding: 20px 0 0 22px; white-space: nowrap; }
.ink { position: absolute; left: 0; top: 0; }

.vscroll { background: #ececec; display: flex; flex-direction: column; align-items: center; padding: 6px 0 6px 1px; justify-content: space-between; }
.vscroll .thumb { width: 14px; height: 478px; border: 1px solid #979797; border-radius: 2px; background: linear-gradient(90deg, #f4f4f4 0 45%, #d3d3d6 50%, #c3c3c8); margin: 7px 0 auto; display: flex; flex-direction: column; justify-content: center; align-items: center; gap: 1px; }
.thumb i { width: 7px; height: 2px; background: #666; border-bottom: 1px solid #eee; }
.hscroll { grid-column: 1 / 3; background: #ececec; display: flex; align-items: center; padding: 0 22px 0 5px; border-bottom: 1px solid #8e8e8e; justify-content: space-between; }
.hscroll .thumb { width: 1520px; height: 15px; border: 1px solid #979797; border-radius: 2px; background: linear-gradient(#f4f4f4 0 45%, #d3d3d6 50%, #c3c3c8); margin: 0 auto 0 8px; display: flex; justify-content: center; align-items: center; gap: 1px; }
.hscroll .thumb i { width: 2px; height: 7px; border: 0; border-right: 1px solid #eee; }

.status { height: 25px; background: #f0eded; border-top: 1px solid #fff; display: flex; color: #1a1a2e; letter-spacing: -.6px; }
.status > div { border-right: 1px solid #d4d2d2; display: flex; align-items: center; padding: 0 0 1px 5px; gap: 5px; }
.status > .s2, .status > .s3 { padding-left: 6px; }
.s1, .s2, .s3, .s4, .s5 { width: 156px; }
.status > .s5 { width: 778px; } .status > .s6 { border: 0; padding-left: 20px; gap: 6px; flex: 1; }
.s6 span { letter-spacing: -.4px; }

.taskbar { height: 40px; background: #2b2fb4; border-top: 1px solid #05051f; display: flex; align-items: center; color: #fff; box-shadow: inset 0 1px #6a6ddb; }
.orb { margin-left: 8px; }
.expl { margin: 0 16px 0 26px; }
.tb { width: 158px; height: 38px; border: 1px solid #8083e6; border-radius: 2px; background: linear-gradient(172deg, #7e80e0 0, #5e61d2 42%, #4144c4 46%, #4144c4); display: flex; align-items: center; gap: 4px; padding-left: 8px; white-space: nowrap; box-shadow: 0 0 0 1px #191c78; letter-spacing: -.25px; flex: none; }
.tb span { margin-top: -2px; }
.ffgroup { display: flex; flex: none; margin-left: 4px; border: 1px solid #8083e6; border-radius: 2px; box-shadow: 0 0 0 1px #191c78; }
.ffgroup .tb { width: 159.400px; height: 36px; border: 0; border-right: 1px solid #3033a4; box-shadow: none; letter-spacing: -.15px; }
.kp { margin-left: 4px; letter-spacing: -.15px; }
.lit { margin-left: 4px; background: linear-gradient(172deg, #b7b9f0 0, #9c9ee9 42%, #7d80df 46%, #8b8ee4); border-color: #b9bbf5; }
.tray { margin-left: 15px; }
.clock { width: 76px; text-align: center; line-height: 16px; margin-left: 4px; letter-spacing: -.35px; }
.peek { margin-left: auto; width: 14px; height: 39px; background: linear-gradient(135deg, #7174dd, #2a2ec8 50%, #3c40f0); border: 1px solid #191c78; border-left-color: #8083e6; }
</style>
